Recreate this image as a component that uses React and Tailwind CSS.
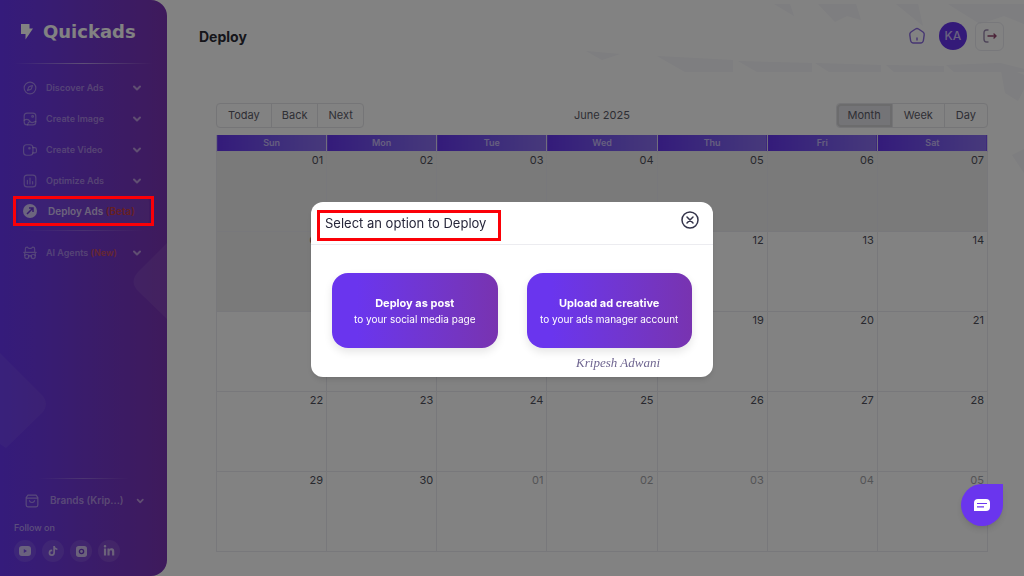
import { useState } from "react";
import { clsx } from "clsx";
import { ChevronDown, Compass } from "lucide-react";
import { FaLinkedinIn, FaTiktok } from "react-icons/fa6";

const days = ["Sun", "Mon", "Tue", "Wed", "Thu", "Fri", "Sat"];

const weeks = [
  ["01", "02", "03", "04", "05", "06", "07"],
  ["08", "09", "10", "11", "12", "13", "14"],
  ["15", "16", "17", "18", "19", "20", "21"],
  ["22", "23", "24", "25", "26", "27", "28"],
  ["29", "30", "01", "02", "03", "04", "05"],
];

const lineIcon = {
  viewBox: "0 0 24 24",
  fill: "none",
  stroke: "currentColor",
  strokeWidth: 2,
  strokeLinecap: "round",
  strokeLinejoin: "round",
  className: "size-[14px] shrink-0",
  "aria-hidden": true,
};

function ImageIcon() {
  return (
    <svg {...lineIcon}>
      <rect x="2" y="2" width="20" height="20" rx="5" />
      <circle cx="16.5" cy="7.5" r="1.5" />
      <path d="M2 14c4-2.500 8-1 10 2s5 3 10 0M8 22c0-2.500 1.500-4.500 4-6" />
    </svg>
  );
}

function VideoIcon() {
  return (
    <svg {...lineIcon}>
      <rect x="1" y="3" width="16" height="18" rx="5" />
      <path d="M17 8h3q3 0 3 3v3q0 3-3 3h-3" />
      <circle cx="11" cy="9" r="1.200" />
    </svg>
  );
}

function ChartIcon() {
  return (
    <svg {...lineIcon}>
      <rect x="2" y="2" width="20" height="20" rx="5" />
      <path d="M7.500 11v6M12 7v10M16.500 13v4" />
    </svg>
  );
}

function AgentIcon() {
  return (
    <svg {...lineIcon}>
      <path d="M4 9V5q0-3 3-3 1 0 2 1.500 3 1.500 6 0Q16 2 17 2q3 0 3 3v4M1.500 11h21M3 11v5M21 11v5M10 17.500c1-1 3-1 4 0" />
      <circle cx="6.500" cy="18" r="3.500" />
      <circle cx="17.500" cy="18" r="3.500" />
    </svg>
  );
}

const menu = [
  { label: "Discover Ads", icon: <Compass className="size-[14px] shrink-0" /> },
  { label: "Create Image", icon: <ImageIcon /> },
  { label: "Create Video", icon: <VideoIcon /> },
  { label: "Optimize Ads", icon: <ChartIcon /> },
];

function MenuItem({ icon, label, tag }) {
  return (
    <button className="flex h-[31px] w-full items-center gap-[9px] whitespace-nowrap pl-[9px] pr-[10px] text-[9px] font-semibold text-white/40">
      {icon}
      <span>
        {label} {tag && <span className="text-[#ef5a2c]/70">{tag}</span>}
      </span>
      <ChevronDown className="ml-auto size-3 text-white/50" strokeWidth={4} />
    </button>
  );
}

function Divider() {
  return <div className="h-px bg-linear-to-r from-transparent via-white/50 to-transparent" />;
}

function Sidebar() {
  return (
    <aside className="relative flex w-[167px] shrink-0 flex-col overflow-hidden rounded-r-2xl bg-linear-to-r from-[#6836f2] to-[#7b34b4] px-[14px] pb-[14px]">
      {/* background shapes */}
      <svg className="absolute inset-0 h-full w-full" viewBox="0 0 167 576" aria-hidden="true">
        <path d="M167 243L138 272Q129 282 138 291L167 319Z" fill="#fff" opacity=".07" />
        <path d="M0 353L43 396Q49 404 43 412L6 448L0 444Z" fill="#fff" opacity=".06" />
      </svg>
      <div className="relative flex h-[63px] items-center gap-[10px] pl-[6px] text-white">
        <svg viewBox="0 0 13 16" className="h-4 w-[13px]" aria-hidden="true">
          <path d="M1 0h8.500v4.500H13L5.500 15.500V10H1z" fill="currentColor" />
        </svg>
        <span className="font-['DejaVu_Sans'] text-[18px] font-bold leading-6">Quickads</span>
      </div>
      <Divider />
      <nav className="relative pt-2">
        {menu.map((item) => (
          <MenuItem key={item.label} icon={item.icon} label={item.label} />
        ))}
        <div className="relative">
          <a
            href="#deploy"
            className="mx-1 flex h-[30px] items-center gap-[11px] whitespace-nowrap rounded-md bg-white/5 pl-[5px] text-[10px] font-semibold text-white/70"
          >
            <svg viewBox="0 0 14 14" className="size-[14px]" aria-hidden="true">
              <circle cx="7" cy="7" r="7" fill="currentColor" />
              <path d="M4 10l6-6M6 4h4v4" stroke="#6a35d8" strokeWidth="1.500" fill="none" />
            </svg>
            <span>
              Deploy Ads <span className="font-semibold text-[#e0401c]/80">(Beta)</span>
            </span>
          </a>
          {/* highlight stays bright above the backdrop */}
          <div className="pointer-events-none absolute -inset-x-px inset-y-0 z-20 border-[3px] border-[#fb0007]" />
        </div>
        <div className="px-2 pt-1 pb-[6px] opacity-40">
          <Divider />
        </div>
        <MenuItem icon={<AgentIcon />} label="AI Agents" tag="(New)" />
      </nav>

      <div className="relative mt-auto">
        <div className="px-6 opacity-50">
          <Divider />
        </div>
        <button className="mt-[6px] flex h-[31px] w-full items-center gap-[11px] whitespace-nowrap pl-[11px] pr-2 text-[10px] font-semibold text-white/45">
          <svg {...lineIcon}>
            <path d="M5 2h14l3 4v13a3 3 0 0 1-3 3H5a3 3 0 0 1-3-3V6zM2 7h20M7.500 11.500c1 4 8 4 9 0" />
          </svg>
          Brands (Krip...)
          <ChevronDown className="ml-auto size-3 text-white/50" strokeWidth={4} />
        </button>
        <p className="mt-1 text-[9px] font-medium leading-4 text-white/50">Follow on</p>
        <div className="mt-1 flex gap-[6px] text-white/65">
          <a href="#youtube" aria-label="YouTube" className="flex size-[22px] items-center justify-center rounded-full bg-white/10">
            <svg viewBox="0 0 12 10" className="h-[10px] w-3">
              <path fillRule="evenodd" d="M3 0h6a3 3 0 0 1 3 3v4a3 3 0 0 1-3 3H3a3 3 0 0 1-3-3V3a3 3 0 0 1 3-3zM4.800 3v4L8 5z" fill="currentColor" />
            </svg>
          </a>
          <a href="#tiktok" aria-label="TikTok" className="flex size-[22px] items-center justify-center rounded-full bg-white/10">
            <FaTiktok className="size-[10px]" />
          </a>
          <a href="#instagram" aria-label="Instagram" className="flex size-[22px] items-center justify-center rounded-full bg-white/10">
            <svg viewBox="0 0 12 12" className="size-[11px]">
              <rect width="12" height="12" rx="3" fill="currentColor" />
              <circle cx="6" cy="6" r="2.300" fill="none" stroke="#6b35c8" strokeWidth="1.500" />
            </svg>
          </a>
          <a href="#linkedin" aria-label="LinkedIn" className="flex size-[22px] items-center justify-center rounded-full bg-white/10">
            <FaLinkedinIn className="size-3" />
          </a>
        </div>
      </div>
    </aside>
  );
}

function Header() {
  return (
    <header className="flex h-[72px] items-center pl-8 pr-5">
      <h1 className="text-[14px] font-bold text-[#2b2b36]">Deploy</h1>
      <div className="ml-auto flex items-center">
        <a href="#home" aria-label="Home" className="text-[#8a6ae0]">
          <svg viewBox="0 0 18 18" className="size-[18px]" fill="none" stroke="currentColor" strokeWidth="1.400" strokeLinejoin="round" strokeLinecap="round">
            <path d="M7.500 2Q9 1 10.500 2L15 5Q16.500 6.200 16.200 7.800L15.400 13.500Q15 16 12.500 16H5.500Q3 16 2.600 13.500L1.800 7.800Q1.500 6.200 3 5ZM9 11v2" />
          </svg>
        </a>
        <button className="ml-[13px] size-7 rounded-full bg-[#6634ee] text-[12px] font-medium text-white/70">KA</button>
        <button aria-label="Log out" className="ml-2 flex size-[29px] items-center justify-center rounded-md border border-[#ececf2]">
          <svg viewBox="0 0 14 14" className="size-[14px]" fill="none" strokeWidth="1.400" strokeLinecap="round">
            <path d="M5 1H3.500Q1 1 1 4v6q0 3 2.500 3H5" stroke="#9c8ab0" />
            <path d="M5 7h8M11 5l2 2-2 2" stroke="#94466f" />
          </svg>
        </button>
      </div>
    </header>
  );
}

function Calendar({ view, setView }) {
  return (
    <section className="mt-[31px] pl-[49px] pr-9">
      <div className="grid grid-cols-3 items-center text-[11px] text-[#5c5c68]">
        <div className="flex justify-self-start rounded border border-[#e6e6ea]">
          <button className="h-[23px] px-[11px]">Today</button>
          <button className="h-[23px] border-x border-[#e6e6ea] px-[10px]">Back</button>
          <button className="h-[23px] px-[10px]">Next</button>
        </div>
        <h2 className="text-center">June 2025</h2>
        <div className="flex justify-self-end rounded border border-[#e6e6ea]">
          {["Month", "Week", "Day"].map((name) => (
            <button
              key={name}
              onClick={() => setView(name)}
              className={clsx(
                "h-[23px] px-[11px]",
                view === name ? "rounded-l bg-[#e4e4ea] inset-ring-2 inset-ring-[#d4d4d6]" : "border-l border-[#e6e6ea]"
              )}
            >
              {name}
            </button>
          ))}
        </div>
      </div>

      <table className="mt-[7px] w-full table-fixed border-collapse">
        <thead>
          <tr>
            {days.map((day) => (
              <th
                key={day}
                className="h-4 border-x border-[#ded6f8] bg-linear-to-r from-[#6634f0] to-[#8b70f2] p-0 text-[9px] font-semibold leading-4 text-white/60"
              >
                {day}
              </th>
            ))}
          </tr>
        </thead>
        <tbody>
          {weeks.map((week, w) => (
            <tr key={w}>
              {week.map((date, d) => (
                <td
                  key={date}
                  className={clsx(
                    "h-20 border border-[#ebebf1] px-[3px] text-right align-top text-[11px] leading-4",
                    (w === 0 || (w === 1 && d === 0)) && "bg-[#efefef]",
                    w === 4 && d > 1 ? "text-[#a5a5aa]" : "text-[#50505a]"
                  )}
                >
                  {date}
                </td>
              ))}
            </tr>
          ))}
        </tbody>
      </table>
    </section>
  );
}

function OptionButton({ title, text }) {
  return (
    <button className="h-[75px] flex-1 rounded-2xl bg-linear-to-r from-[#6a35ee] from-15% to-[#7833b0] text-white shadow-[0_4px_8px_rgba(0,0,0,0.1)]">
      <span className="block text-[11px] font-bold leading-4">{title}</span>
      <span className="block text-[10px] leading-4">{text}</span>
    </button>
  );
}

function DeployModal({ onClose }) {
  return (
    <div className="fixed inset-0 z-10 flex items-center justify-center bg-black/49">
      <div role="dialog" aria-label="Select an option to Deploy" className="mt-[3px] w-[402px] rounded-xl bg-white shadow-md">
        <div className="flex h-[43px] items-center justify-between border-b border-[#ececf0] pl-[6px] pr-[14px]">
          <h2 className="mt-1 h-[31px] w-[184px] border-[3px] border-[#fb0007] pl-[5px] text-[13px] leading-5 text-[#26263a]">
            Select an option to Deploy
          </h2>
          <button onClick={onClose} aria-label="Close" className="mb-[7px] text-[#33334a]">
            <svg viewBox="0 0 18 18" className="size-[18px]" fill="none" stroke="currentColor" strokeWidth="1.500" strokeLinecap="round">
              <circle cx="9" cy="9" r="8" />
              <path d="M6 6l6 6M12 6l-6 6" />
            </svg>
          </button>
        </div>
        <div className="flex gap-[29px] px-[21px] pt-7">
          <OptionButton title="Deploy as post" text="to your social media page" />
          <OptionButton title="Upload ad creative" text="to your ads manager account" />
        </div>
        <p className="mt-[5px] h-6 pr-[53px] text-right font-['Liberation_Serif',serif] text-[13px] italic leading-5 text-[#6f6590]">
          Kripesh Adwani
        </p>
      </div>
    </div>
  );
}

export default function App() {
  const [view, setView] = useState("Month");
  const [open, setOpen] = useState(true);

  return (
    <div className="relative flex min-h-screen bg-white font-['Inter',sans-serif]">
      <Sidebar />
      <main className="relative min-w-0 flex-1 pb-[22px]">
        {/* header pattern */}
        <svg className="absolute top-0 right-0 h-[180px] w-[464px]" viewBox="0 0 464 180" fill="#f7f7fb" aria-hidden="true">
          <path d="M26 51l34 3-18 6zM97 56l76 4v12h-48zM178 61l74 2v9h-55zM255 63l66 2v7h-52zM326 65l58 1v6h-50zM386 65l54-2 24 6v3h-70z" />
          <path d="M214 4h16l4 12zM258 4h38l5 16-14-4-12 6zM336 4h22l5 22zM388 4h76v20l-20-8-24 8z" />
          <path d="M440 65l24 10v14l-6 12-13-8zM452 155l12-6v24z" />
        </svg>
        <div className="relative">
          <Header />
          <Calendar view={view} setView={setView} />
        </div>
      </main>

      {open && <DeployModal onClose={() => setOpen(false)} />}

      <button
        aria-label="Chat"
        className="fixed right-[21px] bottom-[50px] z-20 flex size-[42px] items-center justify-center rounded-full rounded-tr-md bg-[#6a35ee] shadow-md"
      >
        <svg viewBox="0 0 16 12" className="h-3 w-4" aria-hidden="true">
          <path d="M4 0h8q4 0 4 4v4q0 4-4 4H0V4q0-4 4-4z" fill="#fff" />
          <path d="M3 4.500h10M3 7.800h7" stroke="#6a35ee" strokeWidth="1.200" />
        </svg>
      </button>
    </div>
  );
}
